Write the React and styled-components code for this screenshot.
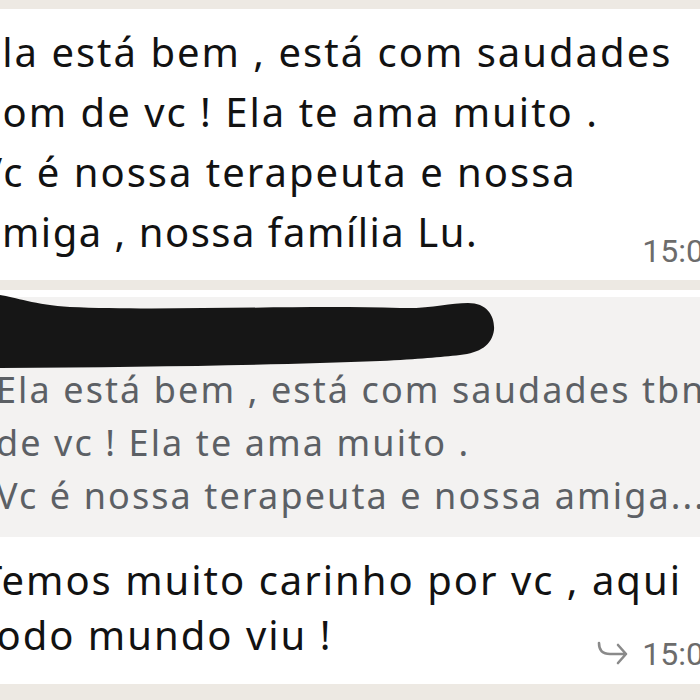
import styled, { createGlobalStyle } from "styled-components";

const GlobalStyle = createGlobalStyle`
  html, body {
    margin: 0;
    padding: 0;
    background: #efeae2;
    overflow: hidden;
  }
`;

const Screen = styled.div`
  width: 700px;
  height: 700px;
  overflow: hidden;
  background: #ede9e3;
`;

const Chat = styled.div`
  display: flex;
  flex-direction: column;
  gap: 10px;
  width: 780px;
  margin-left: -30px;
  padding-top: 9px;
`;

const Bubble = styled.div`
  background: #ffffff;
  display: flex;
  flex-direction: ${(p) => (p.$column ? "column" : "row")};
  justify-content: space-between;
  align-items: ${(p) => (p.$column ? "stretch" : "flex-end")};
  height: ${(p) => p.$h}px;
  box-sizing: border-box;
`;

const Lines = styled.div`
  display: flex;
  flex-direction: column;
  align-self: flex-start;
  min-width: 0;
  padding-left: ${(p) => p.$left || 0}px;
  padding-top: ${(p) => p.$top || 0}px;
`;

const Line = styled.div`
  font-family: "Noto Sans", Roboto, sans-serif;
  font-size: ${(p) => p.$size || 40}px;
  line-height: ${(p) => p.$lh || 60}px;
  letter-spacing: ${(p) => p.$ls ?? 2}px;
  color: ${(p) => p.$color || "#121212"};
  white-space: nowrap;
  margin-left: ${(p) => p.$indent || 0}px;
`;

const Quote = styled.div`
  background: #f3f2f1;
  display: flex;
  flex-direction: column;
  padding-bottom: 15px;
  margin-top: 7px;
`;

const Scribble = styled.svg`
  display: block;
  margin: -2px 0 0 30px;
  overflow: visible;
`;

const Footer = styled.div`
  display: flex;
  justify-content: space-between;
  align-items: flex-end;
  flex: 1;
`;

const Time = styled.span`
  font-family: Roboto, "Noto Sans", sans-serif;
  font-size: 32px;
  line-height: 32px;
  color: #6c6c6c;
  display: flex;
  align-items: center;
  flex-shrink: 0;
  gap: 14px;
  margin-right: 28px;
  margin-bottom: ${(p) => p.$mb || 0}px;
`;

const Forward = () => (
  <svg width="32" height="26" viewBox="0 0 32 26" fill="none">
    <path
      d="M3 2 C3 9 6 13 14 13 L30 13 M22 4 L30 13 L22 22"
      stroke="#8a8a8a"
      strokeWidth="2.6"
      strokeLinecap="round"
      strokeLinejoin="round"
    />
  </svg>
);

export default function App() {
  return (
    <Screen>
      <GlobalStyle />
      <Chat>
        <Bubble $h={271}>
          <Lines $left={8} $top={13}>
            <Line>Ela está bem , está com saudades</Line>
            <Line $indent={-2}>bom de vc ! Ela te ama muito .</Line>
            <Line>Vc é nossa terapeuta e nossa</Line>
            <Line $ls={1.5}>amiga , nossa família Lu.</Line>
          </Lines>
          <Time $mb={13}>15:06</Time>
        </Bubble>
        <Bubble $h={394} $column>
          <Quote>
            <Scribble width="495" height="68" viewBox="0 0 495 68">
              <path
                d="M0 0 C15 2 35 10 70 12 C160 16 300 10 400 13 C430 14 450 8 468 8 C488 8 495 22 494 35 C492 50 480 58 460 60 C440 62 420 64 380 66 C280 70 150 72 0 73 Z"
                fill="#161616"
              />
            </Scribble>
            <Lines $left={26}>
              <Line $size={36} $lh={53} $ls={2.1} $color="#5c6065">
                Ela está bem , está com saudades tbn
              </Line>
              <Line $size={36} $lh={53} $ls={2.1} $color="#5c6065">
                de vc ! Ela te ama muito .
              </Line>
              <Line $size={36} $lh={53} $ls={2.1} $color="#5c6065">
                Vc é nossa terapeuta e nossa amiga...
              </Line>
            </Lines>
          </Quote>
          <Footer>
            <Lines $left={10} $top={15}>
              <Line $lh={55}>Temos muito carinho por vc , aqui</Line>
              <Line $lh={55}>todo mundo viu !</Line>
            </Lines>
            <Time $mb={14}>
              <Forward />
              15:06
            </Time>
          </Footer>
        </Bubble>
      </Chat>
    </Screen>
  );
}
